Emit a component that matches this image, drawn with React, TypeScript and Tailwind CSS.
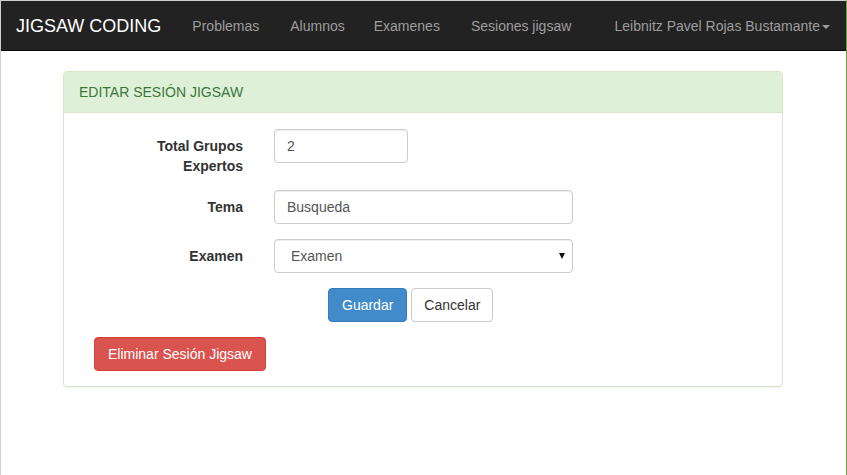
import React from "react";

export default function App() {
  const font = { fontFamily: '"Liberation Sans", Arial, sans-serif' };
  return (
    <div
      className="min-h-[475px] w-full border-l border-t border-r border-l-[#cfcfcf] border-t-[#cfcfcf] border-r-[#6f9a45] bg-white text-[14px] leading-[20px] text-[#333]"
      style={font}
    >
      {/* Navbar */}
      <div className="flex h-[50px] items-stretch border-b border-[#080808] bg-[#222]">
        <div className="flex h-[49px] items-center px-[15px] text-[18px] leading-[20px] text-white">
          JIGSAW CODING
        </div>
        <div className="flex flex-1 items-stretch">
          <div className="flex h-[49px] items-center pl-[16px] pr-[15px] text-[#9d9d9d]">Problemas</div>
          <div className="flex h-[49px] items-center pl-[16px] pr-[14px] text-[#9d9d9d]">Alumnos</div>
          <div className="flex h-[49px] items-center pl-[15px] pr-[15px] text-[#9d9d9d]">Examenes</div>
          <div className="flex h-[49px] items-center px-[16px] text-[#9d9d9d]">Sesiones jigsaw</div>
        </div>
        <div className="flex h-[49px] items-center pl-[15px] pr-[16px] text-[#9d9d9d]">
          Leibnitz Pavel Rojas Bustamante
          <span className="ml-[2px] mt-[2px] inline-block h-0 w-0 border-l-[4px] border-r-[4px] border-t-[4px] border-l-transparent border-r-transparent border-t-[#9d9d9d]" />
        </div>
      </div>

      {/* Panel */}
      <div className="pr-[1px]">
        <div className="mx-auto mt-[20px] w-[720px] rounded-[4px] border border-[#d6e9c6] bg-white shadow-[0_1px_1px_rgba(0,0,0,0.05)]">
          <div className="rounded-t-[3px] border-b border-[#d6e9c6] bg-[#dff0d8] px-[15px] py-[10px] text-[14px] leading-[20px] text-[#3c763d]">
            EDITAR SESIÓN JIGSAW
          </div>
          <div className="p-[15px] pt-[16px]">
            {/* Total Grupos Expertos */}
            <div className="mb-[14px] flex items-start">
              <label className="w-[164px] pt-[7px] text-right font-bold">
                Total Grupos
                <br />
                Expertos
              </label>
              <input
                defaultValue="2"
                className="ml-[31px] h-[34px] w-[134px] rounded-[4px] border border-[#ccc] px-[12px] text-[14px] text-[#555] shadow-[inset_0_1px_1px_rgba(0,0,0,0.075)] outline-none"
                style={font}
              />
            </div>
            {/* Tema */}
            <div className="mb-[15px] flex items-start">
              <label className="w-[164px] pt-[7px] text-right font-bold">Tema</label>
              <input
                defaultValue="Busqueda"
                className="ml-[31px] h-[34px] w-[299px] rounded-[4px] border border-[#ccc] px-[12px] text-[14px] text-[#555] shadow-[inset_0_1px_1px_rgba(0,0,0,0.075)] outline-none"
                style={font}
              />
            </div>
            {/* Examen */}
            <div className="mb-[15px] flex items-start">
              <label className="w-[164px] pt-[7px] text-right font-bold">Examen</label>
              <div className="relative ml-[31px] h-[34px] w-[299px]">
                <select
                  className="h-[34px] w-full appearance-none rounded-[4px] border border-[#ccc] bg-white pl-[16px] pr-[24px] text-[14px] text-[#555] shadow-[inset_0_1px_1px_rgba(0,0,0,0.075)] outline-none"
                  style={font}
                >
                  <option>Examen</option>
                </select>
                <span className="pointer-events-none absolute right-[8px] top-[14px] h-0 w-0 border-l-[3.5px] border-r-[3.5px] border-t-[6px] border-l-transparent border-r-transparent border-t-[#111]" />
              </div>
            </div>
            {/* Buttons */}
            <div className="mb-[15px] flex pl-[249px]">
              <button
                className="h-[34px] rounded-[4px] border border-[#357ebd] bg-[#428bca] px-[13px] text-[14px] text-white"
                style={font}
              >
                Guardar
              </button>
              <button
                className="ml-[4px] h-[34px] rounded-[4px] border border-[#ccc] bg-white px-[12px] text-[14px] text-[#333]"
                style={font}
              >
                Cancelar
              </button>
            </div>
            <div className="pl-[15px]">
              <button
                className="h-[34px] rounded-[4px] border border-[#d43f3a] bg-[#d9534f] px-[13px] text-[14px] text-white"
                style={font}
              >
                Eliminar Sesión Jigsaw
              </button>
            </div>
          </div>
        </div>
      </div>
    </div>
  );
}
